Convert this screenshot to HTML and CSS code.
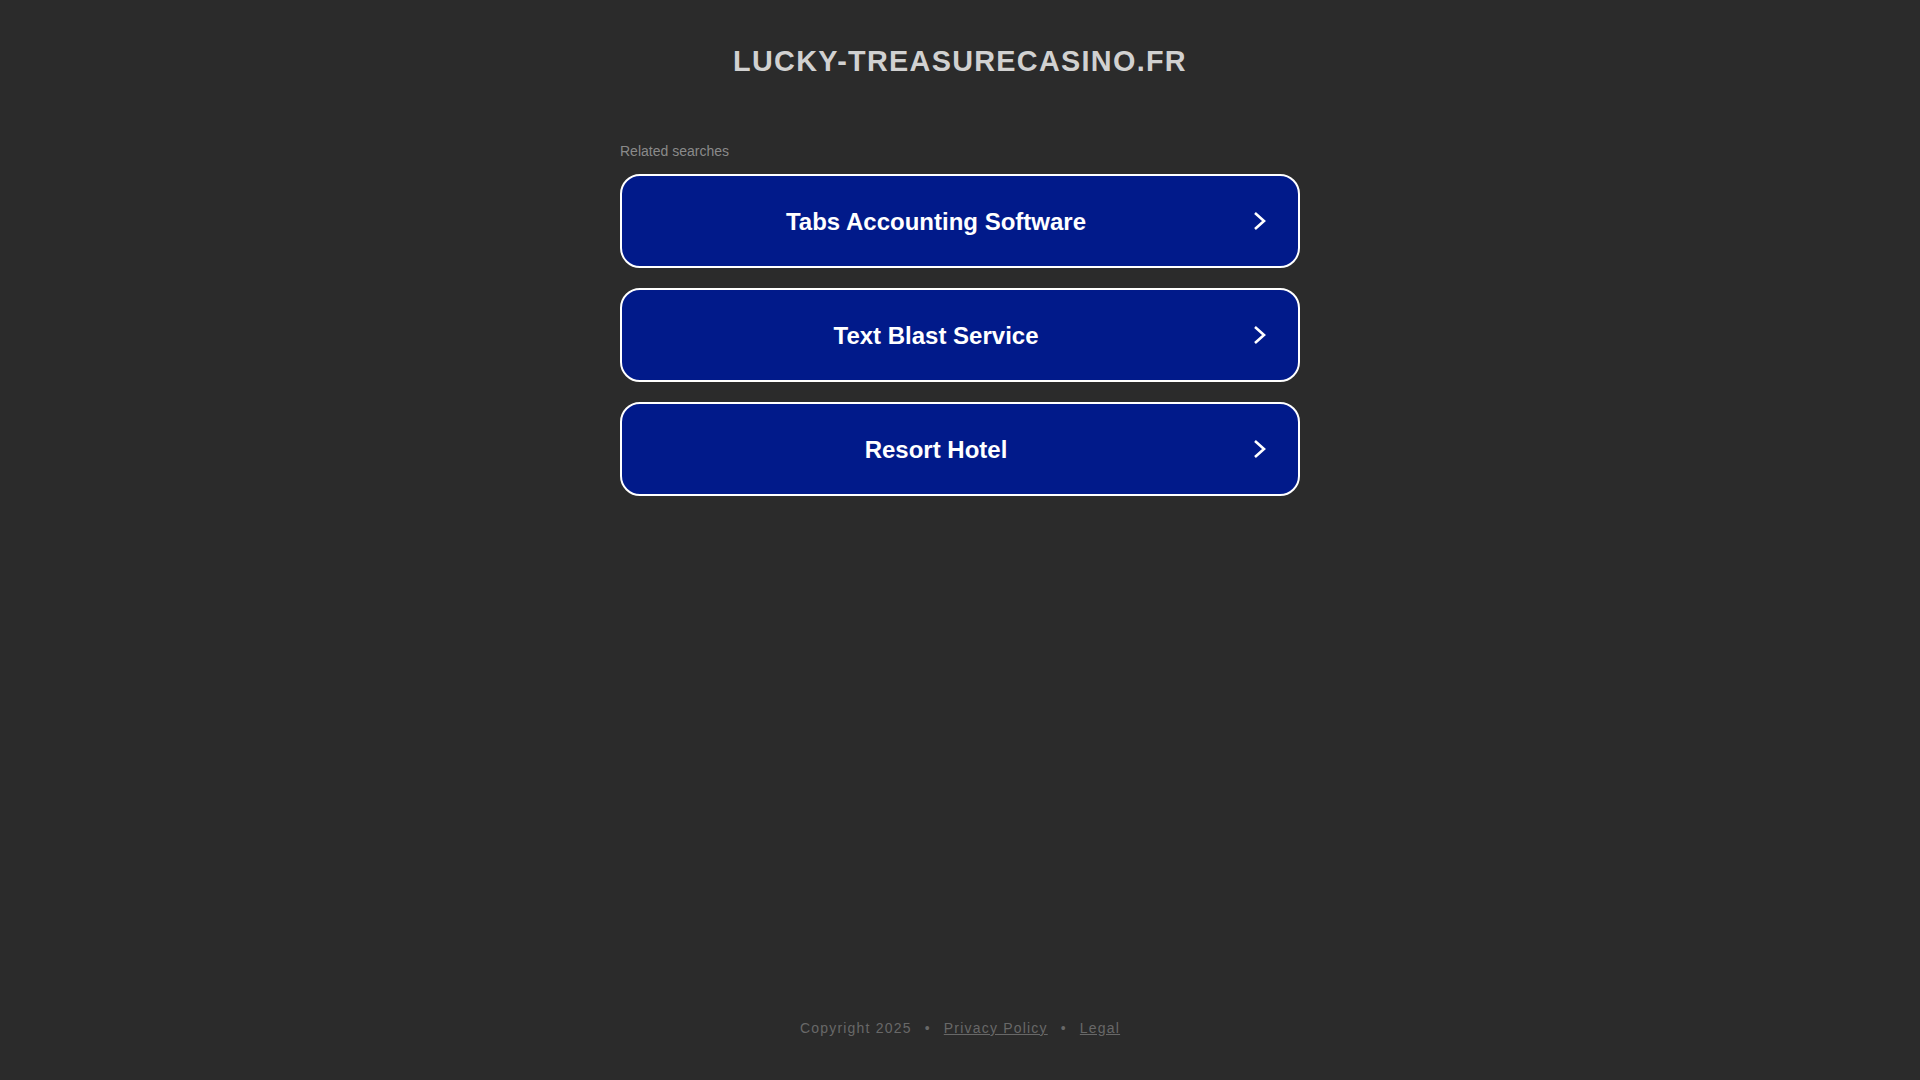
FILE: index.html
```html
<!DOCTYPE html>
<html lang="en">
<head>
<meta charset="utf-8">
<title>lucky-treasurecasino.fr</title>
<link rel="stylesheet" href="styles.css">
</head>
<body>
<div class="page">
  <header class="header">
    <h1 class="domain">LUCKY-TREASURECASINO.FR</h1>
  </header>
  <main class="main">
    <div class="related">
      <p class="related__title">Related searches</p>
      <div class="related__list">
        <a class="related__item" href="#">
          <span class="related__text">Tabs Accounting Software</span>
          <svg class="related__arrow" viewBox="0 0 16 22" width="16" height="22"><polyline points="3,3 12,11 3,19" fill="none" stroke="#fff" stroke-width="2.6"/></svg>
        </a>
        <a class="related__item" href="#">
          <span class="related__text">Text Blast Service</span>
          <svg class="related__arrow" viewBox="0 0 16 22" width="16" height="22"><polyline points="3,3 12,11 3,19" fill="none" stroke="#fff" stroke-width="2.6"/></svg>
        </a>
        <a class="related__item" href="#">
          <span class="related__text">Resort Hotel</span>
          <svg class="related__arrow" viewBox="0 0 16 22" width="16" height="22"><polyline points="3,3 12,11 3,19" fill="none" stroke="#fff" stroke-width="2.6"/></svg>
        </a>
      </div>
    </div>
  </main>
  <footer class="footer">
    <span>Copyright 2025</span>
    <span class="footer__dot">•</span>
    <a class="footer__link" href="#">Privacy Policy</a>
    <span class="footer__dot">•</span>
    <a class="footer__link" href="#">Legal</a>
  </footer>
</div>
</body>
</html>
```

FILE: styles.css
```css
html, body {
  margin: 0;
  padding: 0;
  height: 100%;
}

body {
  background: #2b2b2b;
  font-family: "Liberation Sans", Arial, sans-serif;
}

.page {
  min-height: 100vh;
  display: flex;
  flex-direction: column;
  align-items: center;
}

.header {
  padding-top: 45px;
}

.domain {
  margin: 0;
  font-size: 28.8px;
  font-weight: bold;
  letter-spacing: 1.3px;
  color: #d1d1d1;
  line-height: normal;
  text-align: center;
}

.main {
  flex: 1;
  width: 680px;
}

.related {
  margin-top: 65px;
}

.related__title {
  margin: 0 0 15px 0;
  font-size: 14px;
  line-height: 16px;
  color: #8a8a8a;
}

.related__list {
  display: flex;
  flex-direction: column;
  gap: 20px;
}

.related__item {
  display: flex;
  align-items: center;
  box-sizing: border-box;
  height: 94px;
  padding: 0 30px 0 0;
  background: #011a8a;
  border: 2px solid #ffffff;
  border-radius: 20px;
  text-decoration: none;
  color: #ffffff;
}

.related__text {
  flex: 1;
  padding-top: 2px;
  text-align: center;
  font-size: 24px;
  font-weight: bold;
}

.related__arrow {
  display: block;
  margin-left: 2px;
}

.footer {
  display: flex;
  align-items: center;
  gap: 13px;
  padding-bottom: 44px;
  font-size: 14px;
  line-height: 16px;
  letter-spacing: 1.2px;
  color: #686868;
}

.footer__link {
  color: #686868;
  text-decoration: underline;
}
```
